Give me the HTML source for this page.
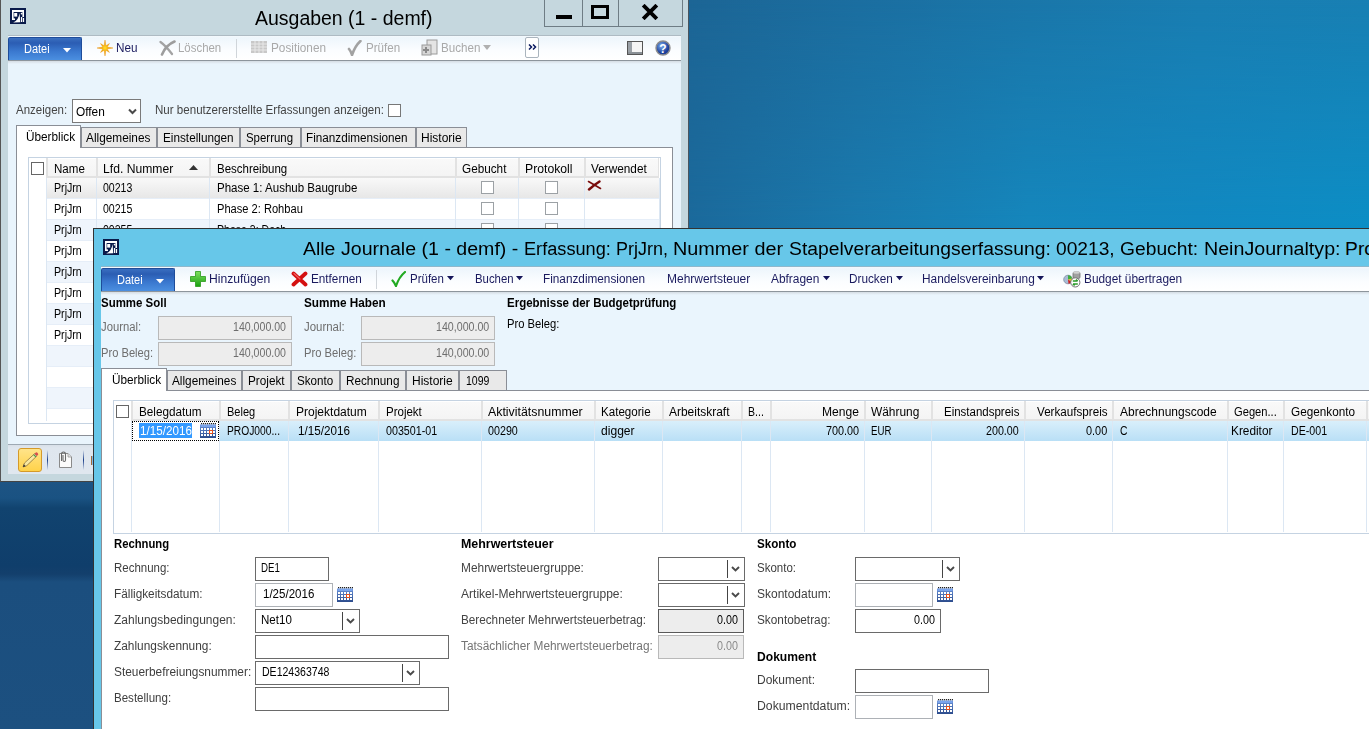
<!DOCTYPE html>
<html><head><meta charset="utf-8"><style>
html,body{margin:0;padding:0;width:1369px;height:729px;overflow:hidden;position:relative;font-family:"Liberation Sans", sans-serif;}
svg{display:block}
</style></head><body>
<div style="position:absolute;left:0px;top:0px;width:1369px;height:729px;background:#1c5080"></div>
<div style="position:absolute;left:689px;top:0px;width:680px;height:228px;background:linear-gradient(90deg,#1b6a9c 0%,#1a7aae 25%,#1587bd 50%,#1189c2 75%,#0c8fc6 100%)"></div>
<div style="position:absolute;left:689px;top:0px;width:680px;height:228px;background:linear-gradient(90deg,#1c6595 0%,#1b6ea0 25%,#1a76a9 50%,#197db1 75%,#187fb3 100%);-webkit-mask-image:linear-gradient(to bottom,#000 0%,rgba(0,0,0,0.5) 50%,transparent 100%);mask-image:linear-gradient(to bottom,#000 0%,rgba(0,0,0,0.5) 50%,transparent 100%)"></div>
<div style="position:absolute;left:0px;top:482px;width:93px;height:247px;background:linear-gradient(#1d5484 0px,#1a5282 16px,#11436f 26px,#0f3e6b 84px,#133f6c 92px,#1b4e7e 100px,#1c5080 247px)"></div>
<div style="position:absolute;left:0px;top:0px;width:689px;height:482px;background:#c5d7de;border-left:1px solid #555;border-right:1px solid #4a555e;border-bottom:1px solid #444;box-sizing:border-box"></div>
<svg style="position:absolute;left:10px;top:8px" width="16" height="16" viewBox="0 0 16 16"><rect x="0" y="0" width="16" height="16" fill="#0a1a4a"/><rect x="2" y="2" width="12" height="2" fill="#fff"/><rect x="2" y="2" width="1.6" height="10" fill="#fff"/><rect x="2" y="10.4" width="3" height="1.6" fill="#fff"/><rect x="12.4" y="2" width="1.6" height="7" fill="#fff"/><rect x="4.2" y="5" width="3" height="3.6" fill="#fff"/><path d="M3.2 14.6 Q8.5 12.5 9.6 5 L10.2 14.2 Z" fill="#fff"/><circle cx="11.6" cy="5.6" r="0.9" fill="#fff"/><rect x="10.9" y="9" width="1.3" height="5" fill="#fff"/><rect x="12.9" y="10" width="1.2" height="4" fill="#fff"/></svg>
<div style="position:absolute;left:255.10px;top:7.15px;font-size:19.5px;color:#000;font-weight:normal;white-space:nowrap;line-height:normal;transform:scaleX(0.9986);transform-origin:0 0;">Ausgaben (1 - demf)</div>
<div style="position:absolute;left:544px;top:-1px;width:139px;height:28px;border:1px solid #6e7c84;box-sizing:border-box"></div>
<div style="position:absolute;left:582px;top:0px;width:1px;height:27px;background:#6e7c84"></div>
<div style="position:absolute;left:618px;top:0px;width:1px;height:27px;background:#6e7c84"></div>
<div style="position:absolute;left:556px;top:15px;width:16px;height:4px;background:#000"></div>
<div style="position:absolute;left:591px;top:5px;width:18px;height:14px;border:3.5px solid #000;box-sizing:border-box"></div>
<svg style="position:absolute;left:641px;top:4px" width="18" height="16" viewBox="0 0 18 16"><path d="M2.2 1.2 L15.8 14.8 M15.8 1.2 L2.2 14.8" stroke="#000" stroke-width="3.9"/></svg>
<div style="position:absolute;left:8px;top:35px;width:673px;height:26px;background:linear-gradient(#f4f9fd,#eef6fc 8%,#fbfdff 60%,#ffffff);border-top:1px solid #aebbc3;border-bottom:1px solid #8d959c;box-sizing:border-box"></div>
<div style="position:absolute;left:8px;top:61px;width:673px;height:384px;background:#e9f4fc"></div>
<div style="position:absolute;left:8px;top:61px;width:673px;height:3px;background:linear-gradient(#d5dce3,#eaf4fc)"></div>
<div style="position:absolute;left:8px;top:37px;width:74px;height:23px;background:linear-gradient(#3a6fc0 0px,#2b5db3 5px,#3a78cf 60%,#4b8fe0);border:1px solid #1e4c9a;border-bottom:none;border-radius:2px 2px 0 0;box-sizing:border-box"></div>
<div style="position:absolute;left:23.90px;top:42.14px;font-size:12px;color:#fff;font-weight:normal;white-space:nowrap;line-height:normal;transform:scaleX(0.9136);transform-origin:0 0;">Datei</div>
<svg style="position:absolute;left:63px;top:48px" width="8" height="5" viewBox="0 0 8 5"><path d="M0 0 L8 0 L4 4.5 Z" fill="#fff"/></svg>
<svg style="position:absolute;left:97px;top:40px" width="16" height="16" viewBox="0 0 16 16"><defs><radialGradient id="sg"><stop offset="0" stop-color="#ffe030"/><stop offset="0.35" stop-color="#f8b810"/><stop offset="1" stop-color="#e88400"/></radialGradient></defs><polygon points="16.00,8.00 10.22,8.92 12.45,12.45 8.92,10.22 8.00,16.00 7.08,10.22 3.55,12.45 5.78,8.92 0.00,8.00 5.78,7.08 3.55,3.55 7.08,5.78 8.00,0.00 8.92,5.78 12.45,3.55 10.22,7.08" fill="url(#sg)" stroke="#e89000" stroke-width="0.4"/></svg>
<div style="position:absolute;left:116.20px;top:41.14px;font-size:12px;color:#1a1a5e;font-weight:normal;white-space:nowrap;line-height:normal;transform:scaleX(0.9764);transform-origin:0 0;">Neu</div>
<svg style="position:absolute;left:159px;top:40px" width="17" height="17" viewBox="0 0 17 17"><path d="M1.5 2 Q7 6 13 14" stroke="#a3a3a3" stroke-width="2.2" stroke-linecap="round" fill="none"/><path d="M15.5 1.5 Q7 5 3 14.5" stroke="#9d9d9d" stroke-width="2.6" stroke-linecap="round" fill="none"/></svg>
<div style="position:absolute;left:178.20px;top:41.14px;font-size:12px;color:#a9a9a9;font-weight:normal;white-space:nowrap;line-height:normal;transform:scaleX(0.9524);transform-origin:0 0;">Löschen</div>
<div style="position:absolute;left:236px;top:39px;width:1px;height:19px;background:#d0d5da"></div>
<svg style="position:absolute;left:251px;top:41px" width="16" height="12" viewBox="0 0 16 12"><rect width="16" height="12" fill="#c8c8c8"/><line x1="4" y1="0" x2="4" y2="12" stroke="#e8e8e8" stroke-width="1"/><line x1="8" y1="0" x2="8" y2="12" stroke="#e8e8e8" stroke-width="1"/><line x1="12" y1="0" x2="12" y2="12" stroke="#e8e8e8" stroke-width="1"/><line x1="0" y1="3" x2="16" y2="3" stroke="#e8e8e8" stroke-width="1"/><line x1="0" y1="6" x2="16" y2="6" stroke="#e8e8e8" stroke-width="1"/><line x1="0" y1="9" x2="16" y2="9" stroke="#e8e8e8" stroke-width="1"/></svg>
<div style="position:absolute;left:270.60px;top:41.14px;font-size:12px;color:#a9a9a9;font-weight:normal;white-space:nowrap;line-height:normal;transform:scaleX(0.9814);transform-origin:0 0;">Positionen</div>
<svg style="position:absolute;left:347px;top:40px" width="15" height="16" viewBox="0 0 15 16"><path d="M2 9 Q3.8 11 5 15 Q8 6 13.5 1" stroke="#a2a2a2" stroke-width="2.6" fill="none" stroke-linecap="round"/></svg>
<div style="position:absolute;left:366.10px;top:41.14px;font-size:12px;color:#a9a9a9;font-weight:normal;white-space:nowrap;line-height:normal;transform:scaleX(0.9669);transform-origin:0 0;">Prüfen</div>
<svg style="position:absolute;left:421px;top:39px" width="18" height="17" viewBox="0 0 18 17"><rect x="6" y="1" width="10" height="14" fill="#e4e4e4" stroke="#9a9a9a"/><rect x="1" y="6" width="9" height="10" fill="#d6d6d6" stroke="#9a9a9a"/><path d="M5 8 V14 M2 11 H8" stroke="#8a8a8a" stroke-width="2"/></svg>
<div style="position:absolute;left:441.10px;top:41.14px;font-size:12px;color:#a9a9a9;font-weight:normal;white-space:nowrap;line-height:normal;transform:scaleX(0.9678);transform-origin:0 0;">Buchen</div>
<svg style="position:absolute;left:483px;top:45px" width="8" height="5" viewBox="0 0 8 5"><path d="M0 0 H8 L4 5 Z" fill="#b0b0b0"/></svg>
<div style="position:absolute;left:525px;top:37px;width:14px;height:21px;background:#fff;border:1px solid #aab4bd;border-radius:2px;box-sizing:border-box"></div>
<svg style="position:absolute;left:528px;top:44px" width="9" height="6" viewBox="0 0 9 6"><path d="M1 0.5 L3.5 3 L1 5.5 M5 0.5 L7.5 3 L5 5.5" stroke="#0b1a60" stroke-width="1.5" fill="none"/></svg>
<svg style="position:absolute;left:627px;top:41px" width="16" height="14" viewBox="0 0 16 14"><rect x="0.5" y="0.5" width="15" height="13" fill="#f4f4f4" stroke="#555"/><rect x="1" y="1" width="4" height="11" fill="#9aa0a6"/><rect x="1" y="11" width="14" height="2" fill="#8a9096"/></svg>
<svg style="position:absolute;left:655px;top:40px" width="16" height="16" viewBox="0 0 16 16"><defs><radialGradient id="hg" cx="0.4" cy="0.35"><stop offset="0" stop-color="#7fb0f0"/><stop offset="1" stop-color="#1d3f9a"/></radialGradient></defs><circle cx="8" cy="8" r="7" fill="url(#hg)" stroke="#8c8c8c" stroke-width="1.4"/><text x="8" y="12.6" font-family="Liberation Sans" font-weight="bold" font-size="12" fill="#fff" text-anchor="middle">?</text></svg>
<div style="position:absolute;left:16.10px;top:102.84px;font-size:12px;color:#444;font-weight:normal;white-space:nowrap;line-height:normal;transform:scaleX(0.9575);transform-origin:0 0;">Anzeigen:</div>
<div style="position:absolute;left:72px;top:99px;width:69px;height:24px;background:#fff;border:1px solid #7a7a7a;box-sizing:border-box"></div>
<div style="position:absolute;left:76.40px;top:105.14px;font-size:12px;color:#000;font-weight:normal;white-space:nowrap;line-height:normal;transform:scaleX(0.9887);transform-origin:0 0;">Offen</div>
<svg style="position:absolute;left:128px;top:108px" width="9" height="7" viewBox="0 0 9 7"><path d="M1 1.5 L4.5 5 L8 1.5" stroke="#4a4a4a" stroke-width="2" fill="none"/></svg>
<div style="position:absolute;left:154.50px;top:102.84px;font-size:12px;color:#444;font-weight:normal;white-space:nowrap;line-height:normal;transform:scaleX(0.9639);transform-origin:0 0;">Nur benutzererstellte Erfassungen anzeigen:</div>
<div style="position:absolute;left:388px;top:104px;width:13px;height:13px;background:#fff;border:1px solid #777;box-sizing:border-box"></div>
<div style="position:absolute;left:16px;top:147px;width:657px;height:289px;background:#fff;border:1px solid #8a8e96;box-sizing:border-box"></div>
<div style="position:absolute;left:16px;top:125px;width:65px;height:23px;background:#fff;border:1px solid #8a8e96;border-bottom:none;box-sizing:border-box"></div>
<div style="position:absolute;left:26.40px;top:130.14px;font-size:12px;color:#000;font-weight:normal;white-space:nowrap;line-height:normal;transform:scaleX(0.9812);transform-origin:0 0;">Überblick</div>
<div style="position:absolute;left:81px;top:127px;width:76px;height:21px;background:#e9e9e9;border:1px solid #8a8e96;box-sizing:border-box"></div>
<div style="position:absolute;left:86.40px;top:131.14px;font-size:12px;color:#000;font-weight:normal;white-space:nowrap;line-height:normal;transform:scaleX(0.9852);transform-origin:0 0;">Allgemeines</div>
<div style="position:absolute;left:157px;top:127px;width:83px;height:21px;background:#e9e9e9;border:1px solid #8a8e96;box-sizing:border-box"></div>
<div style="position:absolute;left:162.80px;top:131.14px;font-size:12px;color:#000;font-weight:normal;white-space:nowrap;line-height:normal;transform:scaleX(0.9797);transform-origin:0 0;">Einstellungen</div>
<div style="position:absolute;left:240px;top:127px;width:61px;height:21px;background:#e9e9e9;border:1px solid #8a8e96;box-sizing:border-box"></div>
<div style="position:absolute;left:246.40px;top:131.14px;font-size:12px;color:#000;font-weight:normal;white-space:nowrap;line-height:normal;transform:scaleX(0.9518);transform-origin:0 0;">Sperrung</div>
<div style="position:absolute;left:301px;top:127px;width:115px;height:21px;background:#e9e9e9;border:1px solid #8a8e96;box-sizing:border-box"></div>
<div style="position:absolute;left:306.40px;top:131.14px;font-size:12px;color:#000;font-weight:normal;white-space:nowrap;line-height:normal;transform:scaleX(0.9763);transform-origin:0 0;">Finanzdimensionen</div>
<div style="position:absolute;left:416px;top:127px;width:51px;height:21px;background:#e9e9e9;border:1px solid #8a8e96;box-sizing:border-box"></div>
<div style="position:absolute;left:421.40px;top:131.14px;font-size:12px;color:#000;font-weight:normal;white-space:nowrap;line-height:normal;transform:scaleX(1.0005);transform-origin:0 0;">Historie</div>
<div style="position:absolute;left:28px;top:157px;width:633px;height:267px;background:#fff;border:1px solid #c5d3e2;box-sizing:border-box"></div>
<div style="position:absolute;left:46px;top:158px;width:613px;height:20px;background:linear-gradient(#ffffff 0px,#ffffff 1px,#f9f9f9 1px,#f4f4f4);border-bottom:2px solid #e2e2e2;box-sizing:border-box"></div>
<div style="position:absolute;left:31px;top:162px;width:13px;height:13px;background:#fff;border:1px solid #666;box-sizing:border-box"></div>
<div style="position:absolute;left:46px;top:178px;width:613px;height:21px;background:linear-gradient(#f9f9f9,#e6e6e6)"></div>
<div style="position:absolute;left:46px;top:220px;width:613px;height:21px;background:#eff5fc"></div>
<div style="position:absolute;left:46px;top:262px;width:613px;height:21px;background:#eff5fc"></div>
<div style="position:absolute;left:46px;top:304px;width:613px;height:21px;background:#eff5fc"></div>
<div style="position:absolute;left:46px;top:346px;width:613px;height:21px;background:#eff5fc"></div>
<div style="position:absolute;left:46px;top:388px;width:613px;height:21px;background:#eff5fc"></div>
<div style="position:absolute;left:46px;top:198px;width:613px;height:1px;background:#e6eef8"></div>
<div style="position:absolute;left:46px;top:219px;width:613px;height:1px;background:#e6eef8"></div>
<div style="position:absolute;left:46px;top:240px;width:613px;height:1px;background:#e6eef8"></div>
<div style="position:absolute;left:46px;top:261px;width:613px;height:1px;background:#e6eef8"></div>
<div style="position:absolute;left:46px;top:282px;width:613px;height:1px;background:#e6eef8"></div>
<div style="position:absolute;left:46px;top:303px;width:613px;height:1px;background:#e6eef8"></div>
<div style="position:absolute;left:46px;top:324px;width:613px;height:1px;background:#e6eef8"></div>
<div style="position:absolute;left:46px;top:345px;width:613px;height:1px;background:#e6eef8"></div>
<div style="position:absolute;left:46px;top:366px;width:613px;height:1px;background:#e6eef8"></div>
<div style="position:absolute;left:46px;top:387px;width:613px;height:1px;background:#e6eef8"></div>
<div style="position:absolute;left:46px;top:408px;width:613px;height:1px;background:#e6eef8"></div>
<div style="position:absolute;left:46px;top:178px;width:1px;height:243px;background:#dce7f3"></div>
<div style="position:absolute;left:96px;top:178px;width:1px;height:243px;background:#dce7f3"></div>
<div style="position:absolute;left:209px;top:178px;width:1px;height:243px;background:#dce7f3"></div>
<div style="position:absolute;left:455px;top:178px;width:1px;height:243px;background:#dce7f3"></div>
<div style="position:absolute;left:518px;top:178px;width:1px;height:243px;background:#dce7f3"></div>
<div style="position:absolute;left:584px;top:178px;width:1px;height:243px;background:#dce7f3"></div>
<div style="position:absolute;left:659px;top:178px;width:1px;height:243px;background:#dce7f3"></div>
<div style="position:absolute;left:46px;top:158px;width:2px;height:20px;background:#e2e2e2"></div>
<div style="position:absolute;left:96px;top:158px;width:2px;height:20px;background:#e2e2e2"></div>
<div style="position:absolute;left:209px;top:158px;width:2px;height:20px;background:#e2e2e2"></div>
<div style="position:absolute;left:455px;top:158px;width:2px;height:20px;background:#e2e2e2"></div>
<div style="position:absolute;left:518px;top:158px;width:2px;height:20px;background:#e2e2e2"></div>
<div style="position:absolute;left:584px;top:158px;width:2px;height:20px;background:#e2e2e2"></div>
<div style="position:absolute;left:658px;top:158px;width:1px;height:20px;background:#e2e2e2"></div>
<div style="position:absolute;left:53.90px;top:162.14px;font-size:12px;color:#000;font-weight:normal;white-space:nowrap;line-height:normal;transform:scaleX(0.9622);transform-origin:0 0;">Name</div>
<div style="position:absolute;left:103.40px;top:162.14px;font-size:12px;color:#000;font-weight:normal;white-space:nowrap;line-height:normal;transform:scaleX(1.0121);transform-origin:0 0;">Lfd. Nummer</div>
<div style="position:absolute;left:216.80px;top:162.14px;font-size:12px;color:#000;font-weight:normal;white-space:nowrap;line-height:normal;transform:scaleX(0.9567);transform-origin:0 0;">Beschreibung</div>
<div style="position:absolute;left:462.30px;top:162.14px;font-size:12px;color:#000;font-weight:normal;white-space:nowrap;line-height:normal;transform:scaleX(0.9788);transform-origin:0 0;">Gebucht</div>
<div style="position:absolute;left:525.30px;top:162.14px;font-size:12px;color:#000;font-weight:normal;white-space:nowrap;line-height:normal;transform:scaleX(1.0176);transform-origin:0 0;">Protokoll</div>
<div style="position:absolute;left:591.20px;top:162.14px;font-size:12px;color:#000;font-weight:normal;white-space:nowrap;line-height:normal;transform:scaleX(0.9824);transform-origin:0 0;">Verwendet</div>
<svg style="position:absolute;left:189px;top:165px" width="9" height="5" viewBox="0 0 9 5"><path d="M0 5 L4.5 0 L9 5 Z" fill="#333"/></svg>
<div style="position:absolute;left:53.90px;top:181.14px;font-size:12px;color:#000;font-weight:normal;white-space:nowrap;line-height:normal;transform:scaleX(0.8868);transform-origin:0 0;">PrjJrn</div>
<div style="position:absolute;left:53.90px;top:202.14px;font-size:12px;color:#000;font-weight:normal;white-space:nowrap;line-height:normal;transform:scaleX(0.8868);transform-origin:0 0;">PrjJrn</div>
<div style="position:absolute;left:53.90px;top:223.14px;font-size:12px;color:#000;font-weight:normal;white-space:nowrap;line-height:normal;transform:scaleX(0.8868);transform-origin:0 0;">PrjJrn</div>
<div style="position:absolute;left:53.90px;top:244.14px;font-size:12px;color:#000;font-weight:normal;white-space:nowrap;line-height:normal;transform:scaleX(0.8868);transform-origin:0 0;">PrjJrn</div>
<div style="position:absolute;left:53.90px;top:265.14px;font-size:12px;color:#000;font-weight:normal;white-space:nowrap;line-height:normal;transform:scaleX(0.8868);transform-origin:0 0;">PrjJrn</div>
<div style="position:absolute;left:53.90px;top:286.14px;font-size:12px;color:#000;font-weight:normal;white-space:nowrap;line-height:normal;transform:scaleX(0.8868);transform-origin:0 0;">PrjJrn</div>
<div style="position:absolute;left:53.90px;top:307.14px;font-size:12px;color:#000;font-weight:normal;white-space:nowrap;line-height:normal;transform:scaleX(0.8868);transform-origin:0 0;">PrjJrn</div>
<div style="position:absolute;left:53.90px;top:328.14px;font-size:12px;color:#000;font-weight:normal;white-space:nowrap;line-height:normal;transform:scaleX(0.8868);transform-origin:0 0;">PrjJrn</div>
<div style="position:absolute;left:103.40px;top:181.14px;font-size:12px;color:#000;font-weight:normal;white-space:nowrap;line-height:normal;transform:scaleX(0.8783);transform-origin:0 0;">00213</div>
<div style="position:absolute;left:216.80px;top:181.14px;font-size:12px;color:#000;font-weight:normal;white-space:nowrap;line-height:normal;transform:scaleX(0.9601);transform-origin:0 0;">Phase 1: Aushub Baugrube</div>
<div style="position:absolute;left:103.40px;top:202.14px;font-size:12px;color:#000;font-weight:normal;white-space:nowrap;line-height:normal;transform:scaleX(0.8783);transform-origin:0 0;">00215</div>
<div style="position:absolute;left:216.80px;top:202.14px;font-size:12px;color:#000;font-weight:normal;white-space:nowrap;line-height:normal;transform:scaleX(0.9253);transform-origin:0 0;">Phase 2: Rohbau</div>
<div style="position:absolute;left:103.40px;top:223.14px;font-size:12px;color:#000;font-weight:normal;white-space:nowrap;line-height:normal;transform:scaleX(0.8783);transform-origin:0 0;">00255</div>
<div style="position:absolute;left:216.80px;top:223.14px;font-size:12px;color:#000;font-weight:normal;white-space:nowrap;line-height:normal;transform:scaleX(0.8791);transform-origin:0 0;">Phase 3: Dach</div>
<div style="position:absolute;left:481px;top:181px;width:13px;height:13px;background:#fff;border:1px solid #9ca1a5;box-sizing:border-box"></div>
<div style="position:absolute;left:545px;top:181px;width:13px;height:13px;background:#fff;border:1px solid #9ca1a5;box-sizing:border-box"></div>
<div style="position:absolute;left:481px;top:202px;width:13px;height:13px;background:#fff;border:1px solid #9ca1a5;box-sizing:border-box"></div>
<div style="position:absolute;left:545px;top:202px;width:13px;height:13px;background:#fff;border:1px solid #9ca1a5;box-sizing:border-box"></div>
<div style="position:absolute;left:481px;top:223px;width:13px;height:13px;background:#fff;border:1px solid #9ca1a5;box-sizing:border-box"></div>
<div style="position:absolute;left:545px;top:223px;width:13px;height:13px;background:#fff;border:1px solid #9ca1a5;box-sizing:border-box"></div>
<svg style="position:absolute;left:587px;top:180px" width="15" height="11" viewBox="0 0 15 11"><path d="M1.5 1.5 L13.5 8.5" stroke="#7a0c0c" stroke-width="1.6" stroke-linecap="round"/><path d="M12.5 1.5 Q7 5 2 9.5" stroke="#7a0c0c" stroke-width="2.4" stroke-linecap="round" fill="none"/></svg>
<div style="position:absolute;left:8px;top:444px;width:673px;height:30px;background:linear-gradient(#d9e0e8,#dfe6ee 3px,#e0e7ef);border-top:1px solid #9ea9b3;box-sizing:border-box"></div>
<div style="position:absolute;left:18px;top:448px;width:24px;height:24px;background:linear-gradient(#ffe48a,#ffd24a);border:1px solid #d59a2a;border-radius:3px;box-sizing:border-box"></div>
<svg style="position:absolute;left:21px;top:451px" width="18" height="18" viewBox="0 0 18 18"><path d="M2 16 L3.5 12 L13.5 2.8 L15.8 5 L5.8 14.6 Z" fill="#f8e8a0" stroke="#7a6030" stroke-width="0.7"/><path d="M13.5 2.8 L14.8 1.6 Q15.6 1 16.4 1.8 L17 2.4 Q17.6 3.2 16.9 3.9 L15.8 5 Z" fill="#d85050"/><path d="M12.6 3.6 L14.9 5.8" stroke="#3a9a50" stroke-width="1.1"/><path d="M2 16 L2.8 13.3 L4.7 15.2 Z" fill="#333"/></svg>
<div style="position:absolute;left:47px;top:450px;width:1px;height:20px;background:linear-gradient(#dfe6ee,#1b3f8a,#dfe6ee)"></div>
<svg style="position:absolute;left:58px;top:451px" width="15" height="18" viewBox="0 0 15 18"><path d="M1.5 2.5 H10 L13.5 6 V16.5 H1.5 Z" fill="#fbfbfb" stroke="#8a8a8a" stroke-width="1"/><path d="M10 2.5 V6 H13.5" fill="#e0e0e0" stroke="#9a9a9a" stroke-width="0.8"/><path d="M3.5 10 V3.2 Q3.5 1 5.5 1 Q7.5 1 7.5 3.2 V9 Q7.5 10.5 6.2 10.5 Q5 10.5 5 9 V4" stroke="#6a6a6a" stroke-width="1.1" fill="none"/></svg>
<div style="position:absolute;left:91px;top:456px;width:3px;height:9px;background:#7ab8e8;border-left:1px solid #a06a3a;box-sizing:border-box"></div>
<div style="position:absolute;left:83px;top:450px;width:1px;height:20px;background:linear-gradient(#dfe6ee,#1b3f8a,#dfe6ee)"></div>
<div style="position:absolute;left:93px;top:228px;width:1276px;height:501px;background:#67c7e9;border-left:1px solid #333;border-top:1px solid #333;box-sizing:border-box"></div>
<svg style="position:absolute;left:103px;top:239px" width="16" height="16" viewBox="0 0 16 16"><rect x="0" y="0" width="16" height="16" fill="#0a1a4a"/><rect x="2" y="2" width="12" height="2" fill="#fff"/><rect x="2" y="2" width="1.6" height="10" fill="#fff"/><rect x="2" y="10.4" width="3" height="1.6" fill="#fff"/><rect x="12.4" y="2" width="1.6" height="7" fill="#fff"/><rect x="4.2" y="5" width="3" height="3.6" fill="#fff"/><path d="M3.2 14.6 Q8.5 12.5 9.6 5 L10.2 14.2 Z" fill="#fff"/><circle cx="11.6" cy="5.6" r="0.9" fill="#fff"/><rect x="10.9" y="9" width="1.3" height="5" fill="#fff"/><rect x="12.9" y="10" width="1.2" height="4" fill="#fff"/></svg>
<div style="position:absolute;left:303.30px;top:238.12px;font-size:19.2px;white-space:pre;line-height:normal;transform:scaleX(1.0120);transform-origin:0 0">Alle </div>
<div style="position:absolute;left:341.10px;top:238.12px;font-size:19.2px;white-space:pre;line-height:normal;transform:scaleX(1.0203);transform-origin:0 0">Journale (1 - demf) - </div>
<div style="position:absolute;left:524.00px;top:238.12px;font-size:19.2px;white-space:pre;line-height:normal;transform:scaleX(0.9473);transform-origin:0 0">Erfassung: </div>
<div style="position:absolute;left:616.00px;top:238.12px;font-size:19.2px;white-space:pre;line-height:normal;transform:scaleX(0.9357);transform-origin:0 0">PrjJrn, </div>
<div style="position:absolute;left:672.90px;top:238.12px;font-size:19.2px;white-space:pre;line-height:normal;transform:scaleX(1.0328);transform-origin:0 0">Nummer der </div>
<div style="position:absolute;left:788.60px;top:238.12px;font-size:19.2px;white-space:pre;line-height:normal;transform:scaleX(1.0061);transform-origin:0 0">Stapelverarbeitungserfassung: </div>
<div style="position:absolute;left:1056.00px;top:238.12px;font-size:19.2px;white-space:pre;line-height:normal;transform:scaleX(0.9990);transform-origin:0 0">00213, </div>
<div style="position:absolute;left:1120.00px;top:238.12px;font-size:19.2px;white-space:pre;line-height:normal;transform:scaleX(1.0030);transform-origin:0 0">Gebucht: </div>
<div style="position:absolute;left:1203.50px;top:238.12px;font-size:19.2px;white-space:pre;line-height:normal;transform:scaleX(1.0242);transform-origin:0 0">NeinJournaltyp: </div>
<div style="position:absolute;left:1345.1px;top:238.12px;font-size:19.2px;color:#000;font-weight:normal;white-space:nowrap;line-height:normal;">Projekt</div>
<div style="position:absolute;left:101px;top:266px;width:1268px;height:26px;background:linear-gradient(#f4f9fd,#eef6fc 8%,#fbfdff 60%,#ffffff);border-top:1px solid #8fb8cc;border-bottom:1px solid #8d959c;box-sizing:border-box"></div>
<div style="position:absolute;left:101px;top:292px;width:1268px;height:437px;background:#eaf5fd"></div>
<div style="position:absolute;left:101px;top:292px;width:1268px;height:3px;background:linear-gradient(#d5dce3,#eaf5fd)"></div>
<div style="position:absolute;left:101px;top:268px;width:74px;height:23px;background:linear-gradient(#3a6fc0 0px,#2b5db3 5px,#3a78cf 60%,#4b8fe0);border:1px solid #1e4c9a;border-bottom:none;border-radius:2px 2px 0 0;box-sizing:border-box"></div>
<div style="position:absolute;left:116.90px;top:273.14px;font-size:12px;color:#fff;font-weight:normal;white-space:nowrap;line-height:normal;transform:scaleX(0.9136);transform-origin:0 0;">Datei</div>
<svg style="position:absolute;left:156px;top:279px" width="8" height="5" viewBox="0 0 8 5"><path d="M0 0 L8 0 L4 4.5 Z" fill="#fff"/></svg>
<svg style="position:absolute;left:190px;top:271px" width="16" height="16" viewBox="0 0 16 16"><defs><linearGradient id="pg" x1="0" y1="0" x2="0" y2="1"><stop offset="0" stop-color="#80e060"/><stop offset="1" stop-color="#18a010"/></linearGradient></defs><path d="M5.5 0.5 H10.5 V5.5 H15.5 V10.5 H10.5 V15.5 H5.5 V10.5 H0.5 V5.5 H5.5 Z" fill="url(#pg)" stroke="#2a9a1a" stroke-width="0.8"/></svg>
<div style="position:absolute;left:209.00px;top:272.14px;font-size:12px;color:#1a1a5e;font-weight:normal;white-space:nowrap;line-height:normal;transform:scaleX(1.0096);transform-origin:0 0;">Hinzufügen</div>
<svg style="position:absolute;left:291px;top:271px" width="17" height="16" viewBox="0 0 17 16"><path d="M2.5 2.5 L14.5 13.5 M14.5 2.5 L2.5 13.5" stroke="#d41010" stroke-width="3.8" stroke-linecap="round"/><path d="M3 2.5 L9 8" stroke="#ff8080" stroke-width="1.2" stroke-linecap="round" opacity="0.7"/></svg>
<div style="position:absolute;left:310.80px;top:272.14px;font-size:12px;color:#1a1a5e;font-weight:normal;white-space:nowrap;line-height:normal;transform:scaleX(0.9779);transform-origin:0 0;">Entfernen</div>
<div style="position:absolute;left:376px;top:270px;width:1px;height:19px;background:#d0d5da"></div>
<svg style="position:absolute;left:391px;top:271px" width="15" height="16" viewBox="0 0 15 16"><path d="M1.5 9.5 Q3.5 11.5 5 15 Q8 6 14 1" stroke="#22aa22" stroke-width="2.2" fill="none" stroke-linecap="round"/></svg>
<div style="position:absolute;left:410.40px;top:272.14px;font-size:12px;color:#1a1a5e;font-weight:normal;white-space:nowrap;line-height:normal;transform:scaleX(0.9584);transform-origin:0 0;">Prüfen</div>
<svg style="position:absolute;left:447px;top:276px" width="7" height="5" viewBox="0 0 7 5"><path d="M0 0 H7 L3.5 4.3 Z" fill="#15155a"/></svg>
<div style="position:absolute;left:474.80px;top:272.14px;font-size:12px;color:#1a1a5e;font-weight:normal;white-space:nowrap;line-height:normal;transform:scaleX(0.9482);transform-origin:0 0;">Buchen</div>
<svg style="position:absolute;left:516px;top:276px" width="7" height="5" viewBox="0 0 7 5"><path d="M0 0 H7 L3.5 4.3 Z" fill="#15155a"/></svg>
<div style="position:absolute;left:543.20px;top:272.14px;font-size:12px;color:#1a1a5e;font-weight:normal;white-space:nowrap;line-height:normal;transform:scaleX(0.9811);transform-origin:0 0;">Finanzdimensionen</div>
<div style="position:absolute;left:667.30px;top:272.14px;font-size:12px;color:#1a1a5e;font-weight:normal;white-space:nowrap;line-height:normal;transform:scaleX(0.9980);transform-origin:0 0;">Mehrwertsteuer</div>
<div style="position:absolute;left:771.10px;top:272.14px;font-size:12px;color:#1a1a5e;font-weight:normal;white-space:nowrap;line-height:normal;transform:scaleX(0.9920);transform-origin:0 0;">Abfragen</div>
<svg style="position:absolute;left:823px;top:276px" width="7" height="5" viewBox="0 0 7 5"><path d="M0 0 H7 L3.5 4.3 Z" fill="#15155a"/></svg>
<div style="position:absolute;left:849.10px;top:272.14px;font-size:12px;color:#1a1a5e;font-weight:normal;white-space:nowrap;line-height:normal;transform:scaleX(0.9805);transform-origin:0 0;">Drucken</div>
<svg style="position:absolute;left:896px;top:276px" width="7" height="5" viewBox="0 0 7 5"><path d="M0 0 H7 L3.5 4.3 Z" fill="#15155a"/></svg>
<div style="position:absolute;left:922.00px;top:272.14px;font-size:12px;color:#1a1a5e;font-weight:normal;white-space:nowrap;line-height:normal;transform:scaleX(0.9887);transform-origin:0 0;">Handelsvereinbarung</div>
<svg style="position:absolute;left:1037px;top:276px" width="7" height="5" viewBox="0 0 7 5"><path d="M0 0 H7 L3.5 4.3 Z" fill="#15155a"/></svg>
<svg style="position:absolute;left:1063px;top:270px" width="18" height="18" viewBox="0 0 18 18"><circle cx="5" cy="9.5" r="4.3" fill="#a9bcd6" stroke="#7d8ca3" stroke-width="0.8"/><path d="M5 9.5 L5 5.2 A4.3 4.3 0 0 1 9.2 8.5 Z" fill="#3fae3f"/><path d="M5 9.5 L9.2 8.5 A4.3 4.3 0 0 1 8.5 12 Z" fill="#e8c020"/><path d="M5 9.5 L8.5 12 A4.3 4.3 0 0 1 5.5 13.8 Z" fill="#d02020"/><rect x="10" y="2" width="7" height="6.5" rx="1.5" fill="#a0a0a0" stroke="#707070" stroke-width="0.8"/><ellipse cx="13.5" cy="2.6" rx="3.3" ry="1.2" fill="#d0d0d0"/><circle cx="12.3" cy="12.4" r="4.6" fill="#fff" stroke="#707070" stroke-width="1"/><path d="M9.8 11 H14.6 M13 9.4 L14.8 11 M14.8 14 H10 M11.6 15.6 L9.8 14" stroke="#2a9a2a" stroke-width="1.3" fill="none"/></svg>
<div style="position:absolute;left:1083.60px;top:272.14px;font-size:12px;color:#1a1a5e;font-weight:normal;white-space:nowrap;line-height:normal;transform:scaleX(0.9877);transform-origin:0 0;">Budget übertragen</div>
<div style="position:absolute;left:101.20px;top:295.74px;font-size:12px;color:#000;font-weight:bold;white-space:nowrap;line-height:normal;transform:scaleX(0.9549);transform-origin:0 0;">Summe Soll</div>
<div style="position:absolute;left:304.10px;top:295.74px;font-size:12px;color:#000;font-weight:bold;white-space:nowrap;line-height:normal;transform:scaleX(0.9800);transform-origin:0 0;">Summe Haben</div>
<div style="position:absolute;left:507.10px;top:295.74px;font-size:12px;color:#000;font-weight:bold;white-space:nowrap;line-height:normal;transform:scaleX(0.9577);transform-origin:0 0;">Ergebnisse der Budgetprüfung</div>
<div style="position:absolute;left:101.20px;top:320.14px;font-size:12px;color:#6e6e6e;font-weight:normal;white-space:nowrap;line-height:normal;transform:scaleX(0.9393);transform-origin:0 0;">Journal:</div>
<div style="position:absolute;left:101.20px;top:346.14px;font-size:12px;color:#6e6e6e;font-weight:normal;white-space:nowrap;line-height:normal;transform:scaleX(0.9297);transform-origin:0 0;">Pro Beleg:</div>
<div style="position:absolute;left:158px;top:316px;width:134px;height:24px;background:#ededed;border:1px solid #b9b9b9;box-sizing:border-box"></div>
<div style="position:absolute;left:158px;top:342px;width:134px;height:24px;background:#ededed;border:1px solid #b9b9b9;box-sizing:border-box"></div>
<div style="position:absolute;left:233.00px;top:320.14px;font-size:12px;color:#6e6e6e;font-weight:normal;white-space:nowrap;line-height:normal;transform:scaleX(0.8825);transform-origin:0 0;">140,000.00</div>
<div style="position:absolute;left:233.00px;top:346.14px;font-size:12px;color:#6e6e6e;font-weight:normal;white-space:nowrap;line-height:normal;transform:scaleX(0.8825);transform-origin:0 0;">140,000.00</div>
<div style="position:absolute;left:304.10px;top:320.14px;font-size:12px;color:#6e6e6e;font-weight:normal;white-space:nowrap;line-height:normal;transform:scaleX(0.9534);transform-origin:0 0;">Journal:</div>
<div style="position:absolute;left:304.10px;top:346.14px;font-size:12px;color:#6e6e6e;font-weight:normal;white-space:nowrap;line-height:normal;transform:scaleX(0.9350);transform-origin:0 0;">Pro Beleg:</div>
<div style="position:absolute;left:361px;top:316px;width:134px;height:24px;background:#ededed;border:1px solid #b9b9b9;box-sizing:border-box"></div>
<div style="position:absolute;left:361px;top:342px;width:134px;height:24px;background:#ededed;border:1px solid #b9b9b9;box-sizing:border-box"></div>
<div style="position:absolute;left:435.90px;top:320.14px;font-size:12px;color:#6e6e6e;font-weight:normal;white-space:nowrap;line-height:normal;transform:scaleX(0.8874);transform-origin:0 0;">140,000.00</div>
<div style="position:absolute;left:435.90px;top:346.14px;font-size:12px;color:#6e6e6e;font-weight:normal;white-space:nowrap;line-height:normal;transform:scaleX(0.8874);transform-origin:0 0;">140,000.00</div>
<div style="position:absolute;left:507.10px;top:317.14px;font-size:12px;color:#000;font-weight:normal;white-space:nowrap;line-height:normal;transform:scaleX(0.9350);transform-origin:0 0;">Pro Beleg:</div>
<div style="position:absolute;left:101px;top:390px;width:1268px;height:339px;background:#fff;border-top:1px solid #8a8e96;border-left:1px solid #8a8e96;box-sizing:border-box"></div>
<div style="position:absolute;left:101px;top:368px;width:66px;height:23px;background:#fff;border:1px solid #8a8e96;border-bottom:none;box-sizing:border-box"></div>
<div style="position:absolute;left:111.60px;top:373.14px;font-size:12px;color:#000;font-weight:normal;white-space:nowrap;line-height:normal;transform:scaleX(0.9812);transform-origin:0 0;">Überblick</div>
<div style="position:absolute;left:167px;top:370px;width:75px;height:21px;background:#e9e9e9;border:1px solid #8a8e96;box-sizing:border-box"></div>
<div style="position:absolute;left:171.50px;top:374.14px;font-size:12px;color:#000;font-weight:normal;white-space:nowrap;line-height:normal;transform:scaleX(0.9836);transform-origin:0 0;">Allgemeines</div>
<div style="position:absolute;left:242px;top:370px;width:49px;height:21px;background:#e9e9e9;border:1px solid #8a8e96;box-sizing:border-box"></div>
<div style="position:absolute;left:248.20px;top:374.14px;font-size:12px;color:#000;font-weight:normal;white-space:nowrap;line-height:normal;transform:scaleX(0.9799);transform-origin:0 0;">Projekt</div>
<div style="position:absolute;left:291px;top:370px;width:49px;height:21px;background:#e9e9e9;border:1px solid #8a8e96;box-sizing:border-box"></div>
<div style="position:absolute;left:297.20px;top:374.14px;font-size:12px;color:#000;font-weight:normal;white-space:nowrap;line-height:normal;transform:scaleX(0.9692);transform-origin:0 0;">Skonto</div>
<div style="position:absolute;left:340px;top:370px;width:66px;height:21px;background:#e9e9e9;border:1px solid #8a8e96;box-sizing:border-box"></div>
<div style="position:absolute;left:346.20px;top:374.14px;font-size:12px;color:#000;font-weight:normal;white-space:nowrap;line-height:normal;transform:scaleX(0.9759);transform-origin:0 0;">Rechnung</div>
<div style="position:absolute;left:406px;top:370px;width:53px;height:21px;background:#e9e9e9;border:1px solid #8a8e96;box-sizing:border-box"></div>
<div style="position:absolute;left:412.40px;top:374.14px;font-size:12px;color:#000;font-weight:normal;white-space:nowrap;line-height:normal;transform:scaleX(1.0005);transform-origin:0 0;">Historie</div>
<div style="position:absolute;left:459px;top:370px;width:48px;height:21px;background:#e9e9e9;border:1px solid #8a8e96;box-sizing:border-box"></div>
<div style="position:absolute;left:465.50px;top:374.14px;font-size:12px;color:#000;font-weight:normal;white-space:nowrap;line-height:normal;transform:scaleX(0.8764);transform-origin:0 0;">1099</div>
<div style="position:absolute;left:113px;top:400px;width:1256px;height:134px;background:#fff;border:1px solid #c5d3e2;border-right:none;box-sizing:border-box"></div>
<div style="position:absolute;left:131px;top:401px;width:1238px;height:20px;background:linear-gradient(#ffffff 0px,#ffffff 1px,#f9f9f9 1px,#f4f4f4);border-bottom:2px solid #e2e2e2;box-sizing:border-box"></div>
<div style="position:absolute;left:116px;top:405px;width:13px;height:13px;background:#fff;border:1px solid #666;box-sizing:border-box"></div>
<div style="position:absolute;left:131px;top:421px;width:1238px;height:20px;background:linear-gradient(#d9effb,#b9dff6)"></div>
<div style="position:absolute;left:131px;top:421px;width:1px;height:111px;background:#dce7f3"></div>
<div style="position:absolute;left:219px;top:421px;width:1px;height:111px;background:#dce7f3"></div>
<div style="position:absolute;left:288px;top:421px;width:1px;height:111px;background:#dce7f3"></div>
<div style="position:absolute;left:378px;top:421px;width:1px;height:111px;background:#dce7f3"></div>
<div style="position:absolute;left:481px;top:421px;width:1px;height:111px;background:#dce7f3"></div>
<div style="position:absolute;left:594px;top:421px;width:1px;height:111px;background:#dce7f3"></div>
<div style="position:absolute;left:662px;top:421px;width:1px;height:111px;background:#dce7f3"></div>
<div style="position:absolute;left:741px;top:421px;width:1px;height:111px;background:#dce7f3"></div>
<div style="position:absolute;left:770px;top:421px;width:1px;height:111px;background:#dce7f3"></div>
<div style="position:absolute;left:864px;top:421px;width:1px;height:111px;background:#dce7f3"></div>
<div style="position:absolute;left:931px;top:421px;width:1px;height:111px;background:#dce7f3"></div>
<div style="position:absolute;left:1024px;top:421px;width:1px;height:111px;background:#dce7f3"></div>
<div style="position:absolute;left:1112px;top:421px;width:1px;height:111px;background:#dce7f3"></div>
<div style="position:absolute;left:1227px;top:421px;width:1px;height:111px;background:#dce7f3"></div>
<div style="position:absolute;left:1283px;top:421px;width:1px;height:111px;background:#dce7f3"></div>
<div style="position:absolute;left:1366px;top:421px;width:1px;height:111px;background:#dce7f3"></div>
<div style="position:absolute;left:131px;top:401px;width:2px;height:20px;background:#e2e2e2"></div>
<div style="position:absolute;left:219px;top:401px;width:2px;height:20px;background:#e2e2e2"></div>
<div style="position:absolute;left:288px;top:401px;width:2px;height:20px;background:#e2e2e2"></div>
<div style="position:absolute;left:378px;top:401px;width:2px;height:20px;background:#e2e2e2"></div>
<div style="position:absolute;left:481px;top:401px;width:2px;height:20px;background:#e2e2e2"></div>
<div style="position:absolute;left:594px;top:401px;width:2px;height:20px;background:#e2e2e2"></div>
<div style="position:absolute;left:662px;top:401px;width:2px;height:20px;background:#e2e2e2"></div>
<div style="position:absolute;left:741px;top:401px;width:2px;height:20px;background:#e2e2e2"></div>
<div style="position:absolute;left:770px;top:401px;width:2px;height:20px;background:#e2e2e2"></div>
<div style="position:absolute;left:864px;top:401px;width:2px;height:20px;background:#e2e2e2"></div>
<div style="position:absolute;left:931px;top:401px;width:2px;height:20px;background:#e2e2e2"></div>
<div style="position:absolute;left:1024px;top:401px;width:2px;height:20px;background:#e2e2e2"></div>
<div style="position:absolute;left:1112px;top:401px;width:2px;height:20px;background:#e2e2e2"></div>
<div style="position:absolute;left:1227px;top:401px;width:2px;height:20px;background:#e2e2e2"></div>
<div style="position:absolute;left:1283px;top:401px;width:2px;height:20px;background:#e2e2e2"></div>
<div style="position:absolute;left:1366px;top:401px;width:2px;height:20px;background:#e2e2e2"></div>
<div style="position:absolute;left:139.00px;top:405.14px;font-size:12px;color:#000;font-weight:normal;white-space:nowrap;line-height:normal;transform:scaleX(0.9774);transform-origin:0 0;">Belegdatum</div>
<div style="position:absolute;left:226.60px;top:405.14px;font-size:12px;color:#000;font-weight:normal;white-space:nowrap;line-height:normal;transform:scaleX(0.9189);transform-origin:0 0;">Beleg</div>
<div style="position:absolute;left:295.70px;top:405.14px;font-size:12px;color:#000;font-weight:normal;white-space:nowrap;line-height:normal;transform:scaleX(1.0013);transform-origin:0 0;">Projektdatum</div>
<div style="position:absolute;left:385.70px;top:405.14px;font-size:12px;color:#000;font-weight:normal;white-space:nowrap;line-height:normal;transform:scaleX(0.9585);transform-origin:0 0;">Projekt</div>
<div style="position:absolute;left:488.20px;top:405.14px;font-size:12px;color:#000;font-weight:normal;white-space:nowrap;line-height:normal;transform:scaleX(1.0292);transform-origin:0 0;">Aktivitätsnummer</div>
<div style="position:absolute;left:601.30px;top:405.14px;font-size:12px;color:#000;font-weight:normal;white-space:nowrap;line-height:normal;transform:scaleX(0.9657);transform-origin:0 0;">Kategorie</div>
<div style="position:absolute;left:669.30px;top:405.14px;font-size:12px;color:#000;font-weight:normal;white-space:nowrap;line-height:normal;transform:scaleX(0.9969);transform-origin:0 0;">Arbeitskraft</div>
<div style="position:absolute;left:748.20px;top:405.14px;font-size:12px;color:#000;font-weight:normal;white-space:nowrap;line-height:normal;transform:scaleX(0.8778);transform-origin:0 0;">B...</div>
<div style="position:absolute;left:822.40px;top:405.14px;font-size:12px;color:#000;font-weight:normal;white-space:nowrap;line-height:normal;transform:scaleX(1.0057);transform-origin:0 0;">Menge</div>
<div style="position:absolute;left:871.20px;top:405.14px;font-size:12px;color:#000;font-weight:normal;white-space:nowrap;line-height:normal;transform:scaleX(0.9920);transform-origin:0 0;">Währung</div>
<div style="position:absolute;left:943.70px;top:405.14px;font-size:12px;color:#000;font-weight:normal;white-space:nowrap;line-height:normal;transform:scaleX(0.9578);transform-origin:0 0;">Einstandspreis</div>
<div style="position:absolute;left:1036.60px;top:405.14px;font-size:12px;color:#000;font-weight:normal;white-space:nowrap;line-height:normal;transform:scaleX(0.9708);transform-origin:0 0;">Verkaufspreis</div>
<div style="position:absolute;left:1119.50px;top:405.14px;font-size:12px;color:#000;font-weight:normal;white-space:nowrap;line-height:normal;transform:scaleX(0.9995);transform-origin:0 0;">Abrechnungscode</div>
<div style="position:absolute;left:1233.60px;top:405.14px;font-size:12px;color:#000;font-weight:normal;white-space:nowrap;line-height:normal;transform:scaleX(0.9300);transform-origin:0 0;">Gegen...</div>
<div style="position:absolute;left:1290.50px;top:405.14px;font-size:12px;color:#000;font-weight:normal;white-space:nowrap;line-height:normal;transform:scaleX(0.9786);transform-origin:0 0;">Gegenkonto</div>
<div style="position:absolute;left:132px;top:421px;width:87px;height:20px;background:#fff;border:1px dotted #000;box-sizing:border-box"></div>
<div style="position:absolute;left:139px;top:423px;width:53px;height:15px;background:#3399ff"></div>
<div style="position:absolute;left:140.20px;top:424.14px;font-size:12px;color:#fff;font-weight:normal;white-space:nowrap;line-height:normal;transform:scaleX(0.9719);transform-origin:0 0;">1/15/2016</div>
<svg style="position:absolute;left:200px;top:423px" width="16" height="15" viewBox="0 0 16 15"><defs><linearGradient id="cg" x1="0" y1="0" x2="0" y2="1"><stop offset="0" stop-color="#6a92d8"/><stop offset="1" stop-color="#2c4c8c"/></linearGradient></defs><rect x="1" y="0" width="1.2" height="1.4" fill="#222"/><rect x="3" y="0" width="1.2" height="1.4" fill="#222"/><rect x="5" y="0" width="1.2" height="1.4" fill="#222"/><rect x="7" y="0" width="1.2" height="1.4" fill="#222"/><rect x="9" y="0" width="1.2" height="1.4" fill="#222"/><rect x="11" y="0" width="1.2" height="1.4" fill="#222"/><rect x="13" y="0" width="1.2" height="1.4" fill="#222"/><rect x="15" y="0" width="1.2" height="1.4" fill="#222"/><rect x="0" y="1.5" width="16" height="13.5" fill="url(#cg)"/><rect x="0.5" y="2" width="15" height="2" fill="#7aa4ec"/><rect x="1" y="5" width="2" height="2" fill="#fff"/><rect x="1" y="8" width="2" height="2" fill="#fff"/><rect x="1" y="11" width="2" height="2" fill="#fff"/><rect x="4" y="5" width="2" height="2" fill="#fff"/><rect x="4" y="8" width="2" height="2" fill="#fff"/><rect x="4" y="11" width="2" height="2" fill="#fff"/><rect x="7" y="5" width="2" height="2" fill="#fff"/><rect x="7" y="8" width="2" height="2" fill="#fff"/><rect x="7" y="11" width="2" height="2" fill="#fff"/><rect x="10" y="5" width="2" height="2" fill="#fff"/><rect x="10" y="8" width="2" height="2" fill="#fff"/><rect x="10" y="11" width="2" height="2" fill="#fff"/><rect x="13" y="5" width="2" height="2" fill="#fff"/><rect x="13" y="8" width="2" height="2" fill="#fff"/><rect x="13" y="11" width="2" height="2" fill="#fff"/><rect x="9" y="7" width="4" height="4" fill="#e8501a"/><rect x="10" y="8" width="2" height="2" fill="#fff"/></svg>
<div style="position:absolute;left:226.60px;top:424.14px;font-size:12px;color:#000;font-weight:normal;white-space:nowrap;line-height:normal;transform:scaleX(0.8543);transform-origin:0 0;">PROJ000...</div>
<div style="position:absolute;left:297.50px;top:424.14px;font-size:12px;color:#000;font-weight:normal;white-space:nowrap;line-height:normal;transform:scaleX(0.9719);transform-origin:0 0;">1/15/2016</div>
<div style="position:absolute;left:385.70px;top:424.14px;font-size:12px;color:#000;font-weight:normal;white-space:nowrap;line-height:normal;transform:scaleX(0.8904);transform-origin:0 0;">003501-01</div>
<div style="position:absolute;left:488.20px;top:424.14px;font-size:12px;color:#000;font-weight:normal;white-space:nowrap;line-height:normal;transform:scaleX(0.8933);transform-origin:0 0;">00290</div>
<div style="position:absolute;left:601.30px;top:424.14px;font-size:12px;color:#000;font-weight:normal;white-space:nowrap;line-height:normal;transform:scaleX(1.0072);transform-origin:0 0;">digger</div>
<div style="position:absolute;left:826.20px;top:424.14px;font-size:12px;color:#000;font-weight:normal;white-space:nowrap;line-height:normal;transform:scaleX(0.9022);transform-origin:0 0;">700.00</div>
<div style="position:absolute;left:871.20px;top:424.14px;font-size:12px;color:#000;font-weight:normal;white-space:nowrap;line-height:normal;transform:scaleX(0.8047);transform-origin:0 0;">EUR</div>
<div style="position:absolute;left:986.40px;top:424.14px;font-size:12px;color:#000;font-weight:normal;white-space:nowrap;line-height:normal;transform:scaleX(0.8913);transform-origin:0 0;">200.00</div>
<div style="position:absolute;left:1086.00px;top:424.14px;font-size:12px;color:#000;font-weight:normal;white-space:nowrap;line-height:normal;transform:scaleX(0.9071);transform-origin:0 0;">0.00</div>
<div style="position:absolute;left:1119.50px;top:424.14px;font-size:12px;color:#000;font-weight:normal;white-space:nowrap;line-height:normal;transform:scaleX(0.8651);transform-origin:0 0;">C</div>
<div style="position:absolute;left:1231.40px;top:424.14px;font-size:12px;color:#000;font-weight:normal;white-space:nowrap;line-height:normal;transform:scaleX(0.9850);transform-origin:0 0;">Kreditor</div>
<div style="position:absolute;left:1290.50px;top:424.14px;font-size:12px;color:#000;font-weight:normal;white-space:nowrap;line-height:normal;transform:scaleX(0.8874);transform-origin:0 0;">DE-001</div>
<div style="position:absolute;left:113.50px;top:537.14px;font-size:12px;color:#000;font-weight:bold;white-space:nowrap;line-height:normal;transform:scaleX(0.9390);transform-origin:0 0;">Rechnung</div>
<div style="position:absolute;left:461.20px;top:537.14px;font-size:12px;color:#000;font-weight:bold;white-space:nowrap;line-height:normal;transform:scaleX(1.0350);transform-origin:0 0;">Mehrwertsteuer</div>
<div style="position:absolute;left:757.40px;top:537.14px;font-size:12px;color:#000;font-weight:bold;white-space:nowrap;line-height:normal;transform:scaleX(0.9710);transform-origin:0 0;">Skonto</div>
<div style="position:absolute;left:757.40px;top:649.74px;font-size:12px;color:#000;font-weight:bold;white-space:nowrap;line-height:normal;transform:scaleX(1.0089);transform-origin:0 0;">Dokument</div>
<div style="position:absolute;left:113.50px;top:561.14px;font-size:12px;color:#3e3e3e;font-weight:normal;white-space:nowrap;line-height:normal;transform:scaleX(0.9561);transform-origin:0 0;">Rechnung:</div>
<div style="position:absolute;left:113.50px;top:587.14px;font-size:12px;color:#3e3e3e;font-weight:normal;white-space:nowrap;line-height:normal;transform:scaleX(0.9830);transform-origin:0 0;">Fälligkeitsdatum:</div>
<div style="position:absolute;left:113.50px;top:613.14px;font-size:12px;color:#3e3e3e;font-weight:normal;white-space:nowrap;line-height:normal;transform:scaleX(0.9975);transform-origin:0 0;">Zahlungsbedingungen:</div>
<div style="position:absolute;left:113.50px;top:639.14px;font-size:12px;color:#3e3e3e;font-weight:normal;white-space:nowrap;line-height:normal;transform:scaleX(0.9893);transform-origin:0 0;">Zahlungskennung:</div>
<div style="position:absolute;left:113.50px;top:665.14px;font-size:12px;color:#3e3e3e;font-weight:normal;white-space:nowrap;line-height:normal;transform:scaleX(0.9888);transform-origin:0 0;">Steuerbefreiungsnummer:</div>
<div style="position:absolute;left:113.50px;top:691.14px;font-size:12px;color:#3e3e3e;font-weight:normal;white-space:nowrap;line-height:normal;transform:scaleX(0.9618);transform-origin:0 0;">Bestellung:</div>
<div style="position:absolute;left:255px;top:557px;width:74px;height:24px;background:#fff;border:1px solid #6a6a6a;box-sizing:border-box"></div>
<div style="position:absolute;left:261.30px;top:561.14px;font-size:12px;color:#000;font-weight:normal;white-space:nowrap;line-height:normal;transform:scaleX(0.8055);transform-origin:0 0;">DE1</div>
<div style="position:absolute;left:255px;top:583px;width:78px;height:24px;background:#fff;border:1px solid #adb1b6;box-sizing:border-box"></div>
<div style="position:absolute;left:262.60px;top:587.14px;font-size:12px;color:#000;font-weight:normal;white-space:nowrap;line-height:normal;transform:scaleX(0.9607);transform-origin:0 0;">1/25/2016</div>
<svg style="position:absolute;left:337px;top:587px" width="16" height="15" viewBox="0 0 16 15"><defs><linearGradient id="cg" x1="0" y1="0" x2="0" y2="1"><stop offset="0" stop-color="#6a92d8"/><stop offset="1" stop-color="#2c4c8c"/></linearGradient></defs><rect x="1" y="0" width="1.2" height="1.4" fill="#222"/><rect x="3" y="0" width="1.2" height="1.4" fill="#222"/><rect x="5" y="0" width="1.2" height="1.4" fill="#222"/><rect x="7" y="0" width="1.2" height="1.4" fill="#222"/><rect x="9" y="0" width="1.2" height="1.4" fill="#222"/><rect x="11" y="0" width="1.2" height="1.4" fill="#222"/><rect x="13" y="0" width="1.2" height="1.4" fill="#222"/><rect x="15" y="0" width="1.2" height="1.4" fill="#222"/><rect x="0" y="1.5" width="16" height="13.5" fill="url(#cg)"/><rect x="0.5" y="2" width="15" height="2" fill="#7aa4ec"/><rect x="1" y="5" width="2" height="2" fill="#fff"/><rect x="1" y="8" width="2" height="2" fill="#fff"/><rect x="1" y="11" width="2" height="2" fill="#fff"/><rect x="4" y="5" width="2" height="2" fill="#fff"/><rect x="4" y="8" width="2" height="2" fill="#fff"/><rect x="4" y="11" width="2" height="2" fill="#fff"/><rect x="7" y="5" width="2" height="2" fill="#fff"/><rect x="7" y="8" width="2" height="2" fill="#fff"/><rect x="7" y="11" width="2" height="2" fill="#fff"/><rect x="10" y="5" width="2" height="2" fill="#fff"/><rect x="10" y="8" width="2" height="2" fill="#fff"/><rect x="10" y="11" width="2" height="2" fill="#fff"/><rect x="13" y="5" width="2" height="2" fill="#fff"/><rect x="13" y="8" width="2" height="2" fill="#fff"/><rect x="13" y="11" width="2" height="2" fill="#fff"/><rect x="9" y="7" width="4" height="4" fill="#e8501a"/><rect x="10" y="8" width="2" height="2" fill="#fff"/></svg>
<div style="position:absolute;left:255px;top:609px;width:105px;height:24px;background:#fff;border:1px solid #6a6a6a;box-sizing:border-box"></div>
<div style="position:absolute;left:342px;top:612px;width:1px;height:18px;background:#444"></div>
<svg style="position:absolute;left:346px;top:618px" width="9" height="6" viewBox="0 0 9 6"><path d="M1 1 L4.5 4.5 L8 1" stroke="#4a4a4a" stroke-width="1.9" fill="none"/></svg>
<div style="position:absolute;left:261.30px;top:613.14px;font-size:12px;color:#000;font-weight:normal;white-space:nowrap;line-height:normal;transform:scaleX(0.9622);transform-origin:0 0;">Net10</div>
<div style="position:absolute;left:255px;top:635px;width:194px;height:24px;background:#fff;border:1px solid #6a6a6a;box-sizing:border-box"></div>
<div style="position:absolute;left:255px;top:661px;width:165px;height:24px;background:#fff;border:1px solid #6a6a6a;box-sizing:border-box"></div>
<div style="position:absolute;left:402px;top:664px;width:1px;height:18px;background:#444"></div>
<svg style="position:absolute;left:406px;top:670px" width="9" height="6" viewBox="0 0 9 6"><path d="M1 1 L4.5 4.5 L8 1" stroke="#4a4a4a" stroke-width="1.9" fill="none"/></svg>
<div style="position:absolute;left:261.70px;top:665.14px;font-size:12px;color:#000;font-weight:normal;white-space:nowrap;line-height:normal;transform:scaleX(0.8783);transform-origin:0 0;">DE124363748</div>
<div style="position:absolute;left:255px;top:687px;width:194px;height:24px;background:#fff;border:1px solid #6a6a6a;box-sizing:border-box"></div>
<div style="position:absolute;left:461.40px;top:561.14px;font-size:12px;color:#444;font-weight:normal;white-space:nowrap;line-height:normal;transform:scaleX(0.9907);transform-origin:0 0;">Mehrwertsteuergruppe:</div>
<div style="position:absolute;left:461.40px;top:587.14px;font-size:12px;color:#444;font-weight:normal;white-space:nowrap;line-height:normal;transform:scaleX(1.0031);transform-origin:0 0;">Artikel-Mehrwertsteuergruppe:</div>
<div style="position:absolute;left:461.40px;top:613.14px;font-size:12px;color:#444;font-weight:normal;white-space:nowrap;line-height:normal;transform:scaleX(0.9767);transform-origin:0 0;">Berechneter Mehrwertsteuerbetrag:</div>
<div style="position:absolute;left:461.40px;top:639.14px;font-size:12px;color:#747474;font-weight:normal;white-space:nowrap;line-height:normal;transform:scaleX(0.9882);transform-origin:0 0;">Tatsächlicher Mehrwertsteuerbetrag:</div>
<div style="position:absolute;left:658px;top:557px;width:87px;height:24px;background:#fff;border:1px solid #6a6a6a;box-sizing:border-box"></div>
<div style="position:absolute;left:727px;top:560px;width:1px;height:18px;background:#444"></div>
<svg style="position:absolute;left:731px;top:566px" width="9" height="6" viewBox="0 0 9 6"><path d="M1 1 L4.5 4.5 L8 1" stroke="#4a4a4a" stroke-width="1.9" fill="none"/></svg>
<div style="position:absolute;left:658px;top:583px;width:87px;height:24px;background:#fff;border:1px solid #6a6a6a;box-sizing:border-box"></div>
<div style="position:absolute;left:727px;top:586px;width:1px;height:18px;background:#444"></div>
<svg style="position:absolute;left:731px;top:592px" width="9" height="6" viewBox="0 0 9 6"><path d="M1 1 L4.5 4.5 L8 1" stroke="#4a4a4a" stroke-width="1.9" fill="none"/></svg>
<div style="position:absolute;left:658px;top:609px;width:86px;height:24px;background:#ededed;border:1px solid #5a5a5a;box-sizing:border-box"></div>
<div style="position:absolute;left:717.20px;top:613.14px;font-size:12px;color:#000;font-weight:normal;white-space:nowrap;line-height:normal;transform:scaleX(0.8943);transform-origin:0 0;">0.00</div>
<div style="position:absolute;left:658px;top:635px;width:86px;height:24px;background:#ededed;border:1px solid #b9b9b9;box-sizing:border-box"></div>
<div style="position:absolute;left:717.20px;top:639.14px;font-size:12px;color:#8a8a8a;font-weight:normal;white-space:nowrap;line-height:normal;transform:scaleX(0.8943);transform-origin:0 0;">0.00</div>
<div style="position:absolute;left:757.40px;top:561.14px;font-size:12px;color:#3e3e3e;font-weight:normal;white-space:nowrap;line-height:normal;transform:scaleX(0.9587);transform-origin:0 0;">Skonto:</div>
<div style="position:absolute;left:757.40px;top:587.14px;font-size:12px;color:#3e3e3e;font-weight:normal;white-space:nowrap;line-height:normal;transform:scaleX(0.9995);transform-origin:0 0;">Skontodatum:</div>
<div style="position:absolute;left:757.40px;top:613.14px;font-size:12px;color:#3e3e3e;font-weight:normal;white-space:nowrap;line-height:normal;transform:scaleX(0.9835);transform-origin:0 0;">Skontobetrag:</div>
<div style="position:absolute;left:757.40px;top:673.14px;font-size:12px;color:#3e3e3e;font-weight:normal;white-space:nowrap;line-height:normal;transform:scaleX(0.9997);transform-origin:0 0;">Dokument:</div>
<div style="position:absolute;left:757.40px;top:699.14px;font-size:12px;color:#3e3e3e;font-weight:normal;white-space:nowrap;line-height:normal;transform:scaleX(1.0199);transform-origin:0 0;">Dokumentdatum:</div>
<div style="position:absolute;left:855px;top:557px;width:105px;height:24px;background:#fff;border:1px solid #6a6a6a;box-sizing:border-box"></div>
<div style="position:absolute;left:942px;top:560px;width:1px;height:18px;background:#444"></div>
<svg style="position:absolute;left:946px;top:566px" width="9" height="6" viewBox="0 0 9 6"><path d="M1 1 L4.5 4.5 L8 1" stroke="#4a4a4a" stroke-width="1.9" fill="none"/></svg>
<div style="position:absolute;left:855px;top:583px;width:78px;height:24px;background:#fff;border:1px solid #adb1b6;box-sizing:border-box"></div>
<svg style="position:absolute;left:937px;top:587px" width="16" height="15" viewBox="0 0 16 15"><defs><linearGradient id="cg" x1="0" y1="0" x2="0" y2="1"><stop offset="0" stop-color="#6a92d8"/><stop offset="1" stop-color="#2c4c8c"/></linearGradient></defs><rect x="1" y="0" width="1.2" height="1.4" fill="#222"/><rect x="3" y="0" width="1.2" height="1.4" fill="#222"/><rect x="5" y="0" width="1.2" height="1.4" fill="#222"/><rect x="7" y="0" width="1.2" height="1.4" fill="#222"/><rect x="9" y="0" width="1.2" height="1.4" fill="#222"/><rect x="11" y="0" width="1.2" height="1.4" fill="#222"/><rect x="13" y="0" width="1.2" height="1.4" fill="#222"/><rect x="15" y="0" width="1.2" height="1.4" fill="#222"/><rect x="0" y="1.5" width="16" height="13.5" fill="url(#cg)"/><rect x="0.5" y="2" width="15" height="2" fill="#7aa4ec"/><rect x="1" y="5" width="2" height="2" fill="#fff"/><rect x="1" y="8" width="2" height="2" fill="#fff"/><rect x="1" y="11" width="2" height="2" fill="#fff"/><rect x="4" y="5" width="2" height="2" fill="#fff"/><rect x="4" y="8" width="2" height="2" fill="#fff"/><rect x="4" y="11" width="2" height="2" fill="#fff"/><rect x="7" y="5" width="2" height="2" fill="#fff"/><rect x="7" y="8" width="2" height="2" fill="#fff"/><rect x="7" y="11" width="2" height="2" fill="#fff"/><rect x="10" y="5" width="2" height="2" fill="#fff"/><rect x="10" y="8" width="2" height="2" fill="#fff"/><rect x="10" y="11" width="2" height="2" fill="#fff"/><rect x="13" y="5" width="2" height="2" fill="#fff"/><rect x="13" y="8" width="2" height="2" fill="#fff"/><rect x="13" y="11" width="2" height="2" fill="#fff"/><rect x="9" y="7" width="4" height="4" fill="#e8501a"/><rect x="10" y="8" width="2" height="2" fill="#fff"/></svg>
<div style="position:absolute;left:855px;top:609px;width:86px;height:24px;background:#fff;border:1px solid #6a6a6a;box-sizing:border-box"></div>
<div style="position:absolute;left:914.00px;top:613.14px;font-size:12px;color:#000;font-weight:normal;white-space:nowrap;line-height:normal;transform:scaleX(0.8943);transform-origin:0 0;">0.00</div>
<div style="position:absolute;left:855px;top:669px;width:134px;height:24px;background:#fff;border:1px solid #6a6a6a;box-sizing:border-box"></div>
<div style="position:absolute;left:855px;top:695px;width:78px;height:24px;background:#fff;border:1px solid #adb1b6;box-sizing:border-box"></div>
<svg style="position:absolute;left:937px;top:699px" width="16" height="15" viewBox="0 0 16 15"><defs><linearGradient id="cg" x1="0" y1="0" x2="0" y2="1"><stop offset="0" stop-color="#6a92d8"/><stop offset="1" stop-color="#2c4c8c"/></linearGradient></defs><rect x="1" y="0" width="1.2" height="1.4" fill="#222"/><rect x="3" y="0" width="1.2" height="1.4" fill="#222"/><rect x="5" y="0" width="1.2" height="1.4" fill="#222"/><rect x="7" y="0" width="1.2" height="1.4" fill="#222"/><rect x="9" y="0" width="1.2" height="1.4" fill="#222"/><rect x="11" y="0" width="1.2" height="1.4" fill="#222"/><rect x="13" y="0" width="1.2" height="1.4" fill="#222"/><rect x="15" y="0" width="1.2" height="1.4" fill="#222"/><rect x="0" y="1.5" width="16" height="13.5" fill="url(#cg)"/><rect x="0.5" y="2" width="15" height="2" fill="#7aa4ec"/><rect x="1" y="5" width="2" height="2" fill="#fff"/><rect x="1" y="8" width="2" height="2" fill="#fff"/><rect x="1" y="11" width="2" height="2" fill="#fff"/><rect x="4" y="5" width="2" height="2" fill="#fff"/><rect x="4" y="8" width="2" height="2" fill="#fff"/><rect x="4" y="11" width="2" height="2" fill="#fff"/><rect x="7" y="5" width="2" height="2" fill="#fff"/><rect x="7" y="8" width="2" height="2" fill="#fff"/><rect x="7" y="11" width="2" height="2" fill="#fff"/><rect x="10" y="5" width="2" height="2" fill="#fff"/><rect x="10" y="8" width="2" height="2" fill="#fff"/><rect x="10" y="11" width="2" height="2" fill="#fff"/><rect x="13" y="5" width="2" height="2" fill="#fff"/><rect x="13" y="8" width="2" height="2" fill="#fff"/><rect x="13" y="11" width="2" height="2" fill="#fff"/><rect x="9" y="7" width="4" height="4" fill="#e8501a"/><rect x="10" y="8" width="2" height="2" fill="#fff"/></svg>
</body></html>
